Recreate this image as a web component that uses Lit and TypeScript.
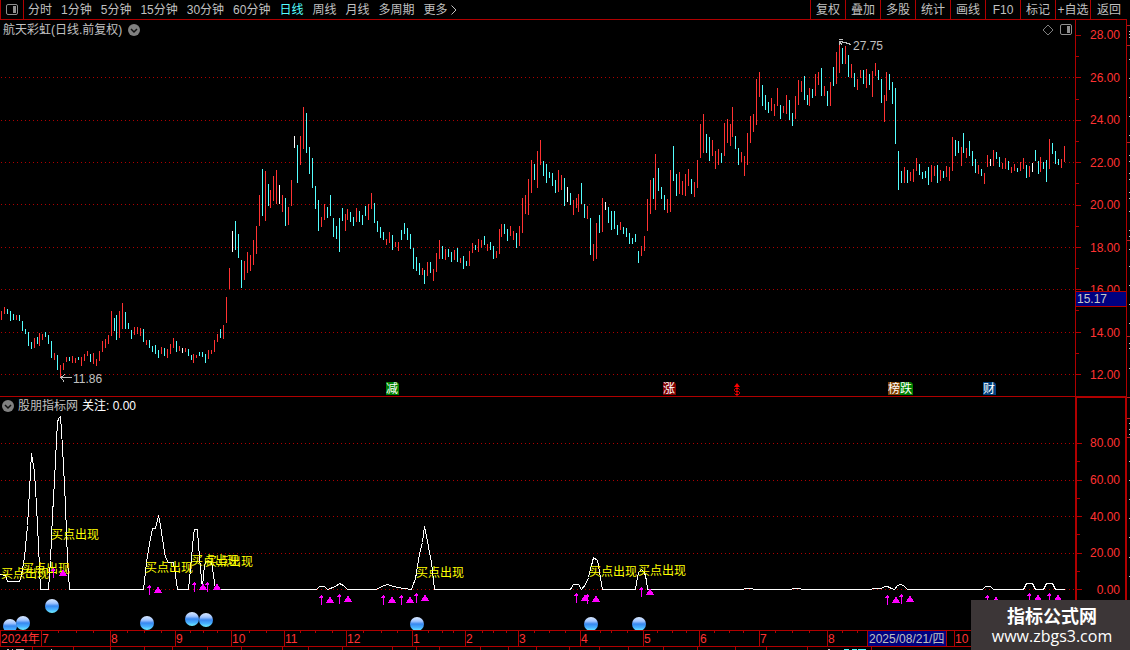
import { LitElement, html, svg, css } from "lit";
import { customElement, state } from "lit/decorators.js";
import { classMap } from "lit/directives/class-map.js";

// Each bar: x, high, low, kind (r = rising, c = falling, w = flat).
const BARS = `1,311,320r 4,307,314r 7,309,314c 10,311,321c 13,314,320c 16,315,320r 19,315,321c 22,321,331c 25,329,334c 28,332,346c 31,342,349c
34,338,348r 37,337,344c 39,333,346r 42,334,340r 45,332,337c 48,335,344c 51,341,358c 54,353,360r 57,355,370c 60,365,378r 63,363,370r 66,357,362r
69,357,361c 72,356,363r 75,358,363r 78,357,360c 81,357,366r 84,354,361r 87,351,356r 90,354,362c 93,353,364r 96,359,366r 99,351,361r 102,341,352r
105,339,348r 108,335,344r 111,311,336r 114,318,331c 116,315,340c 119,311,338r 122,303,329r 125,312,329c 128,323,329c 131,330,339c 134,327,335r
137,327,334r 140,328,336r 143,329,342c 146,340,345r 149,340,348c 152,346,352c 155,345,354c 158,350,358c 161,347,354r 164,348,356c 167,349,358r
170,344,354r 173,338,348r 176,341,352c 179,346,351r 182,348,353w 185,348,352r 188,349,356c 191,355,360c 193,354,363r 196,355,358r 199,352,356c
202,352,357c 205,354,363c 208,350,359r 211,350,354r 214,340,352r 217,334,342r 220,329,338c 223,325,339r 226,297,323r 229,268,289r 232,231,252w
235,221,250c 238,234,258c 241,260,288c 244,261,280r 247,252,273r 250,255,271r 253,240,265r 256,226,254r 259,195,226r 262,169,216c 265,171,221r
268,184,206c 270,190,208r 273,176,201r 276,170,204r 279,185,204w 282,195,212r 285,198,226c 288,207,225r 291,180,206r 294,136,148w 297,145,183c
300,136,165r 303,107,149r 306,113,153c 309,147,174c 312,158,188c 315,186,209c 318,200,231c 321,217,227r 324,204,220r 327,207,218c 330,195,216c
333,218,237c 336,226,239c 339,218,252c 342,208,221c 345,214,231r 347,209,220r 350,212,222c 353,217,226c 356,208,222r 359,211,222c 362,215,225c
365,206,216c 368,204,220r 371,193,209r 374,203,223c 377,221,232c 380,227,238c 383,232,240c 386,239,245r 389,232,243r 392,235,250c 395,242,247r
398,242,251r 401,230,240c 404,223,234c 407,228,240c 410,234,249c 413,248,269c 416,257,271c 419,263,275c 422,268,275r 424,270,284c 427,262,276r
430,262,273c 433,269,281r 436,253,272r 439,240,259r 442,246,259c 445,249,260r 448,249,257c 451,252,262c 454,250,260r 457,248,262c 460,258,263r
463,256,269c 466,261,266c 469,251,266r 472,243,253r 475,245,250c 478,239,252r 481,240,248r 484,236,245c 487,244,251r 490,242,250c 493,246,259c
496,251,258r 499,229,254r 501,224,237r 504,224,234c 507,229,241c 510,226,236r 513,231,240r 516,233,248c 519,226,246r 522,198,233r 525,195,214r
528,179,215r 531,160,193r 534,164,180c 537,151,188r 540,140,165r 543,161,176c 546,164,183c 549,172,178c 552,173,186c 555,180,193c 558,170,192r
561,175,190r 564,178,206c 567,187,202w 570,193,205c 573,200,215r 576,198,208r 578,194,212r 581,183,204c 584,204,218c 587,206,219r 590,218,255c
593,244,261r 596,223,259r 599,215,233c 602,198,232r 605,202,210w 608,207,223c 611,211,230c 614,211,229c 617,225,235c 620,222,230r 623,227,234c
626,228,237c 629,233,244c 632,238,244c 635,234,242c 638,251,263c 641,246,256r 644,236,251r 647,199,231r 650,180,214r 653,178,199c 655,154,210r
658,168,191c 661,187,199c 664,195,210c 667,199,213r 670,170,212r 673,146,181c 676,174,196c 679,172,194r 682,181,195r 685,174,196r 688,169,186r
691,179,194c 694,182,197r 697,160,188r 700,124,158r 703,114,153r 706,134,153c 709,137,161c 712,140,156r 715,151,169r 718,149,165r 721,153,163c
724,123,156r 727,119,143r 730,124,146r 732,107,137r 735,136,149c 738,148,165c 741,152,162r 744,156,176r 747,133,165r 750,116,143r 753,114,132r
756,79,125r 759,72,97r 762,85,106c 765,95,110c 768,102,113c 771,98,111r 774,104,116r 777,88,106r 780,105,119c 783,106,113r 786,95,114r
789,100,120c 792,113,126c 795,96,119r 798,80,105r 801,81,92r 804,76,100c 807,95,105c 809,88,106r 812,89,98c 815,74,96r 818,72,85r 821,68,96c
824,86,96r 827,91,106c 830,82,106r 833,67,86c 836,52,84r 839,42,73r 842,48,64c 845,46,64r 848,55,77c 851,64,78r 854,73,87c 857,79,90r
860,70,78r 863,70,84c 866,69,88r 869,74,85c 872,71,97r 875,63,76r 878,70,80c 881,79,103c 884,95,122r 886,72,101r 889,74,90c 892,82,104c
895,88,144c 898,151,190c 901,171,183c 904,167,183r 907,170,183c 910,172,181r 913,169,182r 916,158,171r 919,164,175c 922,172,179c 925,171,178c
928,167,185c 931,165,182r 934,166,176r 937,165,183c 940,170,181r 943,171,178c 946,166,177r 949,167,181r 952,137,171r 955,140,156c 958,141,153c
961,147,166r 963,133,153c 966,148,158r 969,141,156c 972,151,166c 975,159,173c 978,165,174r 981,169,176c 984,173,184r 987,155,167r 990,159,166w
993,150,166r 996,152,159c 999,157,167c 1002,163,169r 1005,158,169r 1008,161,170c 1011,167,173r 1014,164,171r 1017,168,172c 1020,162,171r
1023,158,169r 1026,165,178c 1029,166,177r 1032,163,172w 1035,150,161c 1038,161,174c 1040,157,172r 1043,162,169c 1046,160,182c 1049,139,169r
1052,143,154c 1055,151,164c 1058,159,165c 1061,159,168r 1064,146,162r`
  .trim()
  .split(/\s+/)
  .map((item) => {
    const kind = item.slice(-1);
    const [x, high, low] = item.slice(0, -1).split(",").map(Number);
    return { x, high, low, kind };
  });

const INDICATOR =
  "0,574 5,575 7,581 19,581 21,575 24,557 27,525 29,490 31,453 34,472 36,505 38,545 40,589 48,589 50,560 52,515 54,480 56,440 57,422 58,418 60,416 61,430 63,465 65,505 67,560 69,589 " +
  "143,589 146,562 149,543 152,528 155,528 158,515 160,525 163,545 165,557 168,562 173,562 175,575 177,589 188,589 190,568 193,535 194,529 197,529 198,545 200,568 202,589 203,572 205,561 211,561 213,575 215,589 " +
  "316,589 319,586 324,586 327,589 335,586 339,583 343,585 347,589 376,589 381,586 387,584 393,586 403,588 411,589 415,578 417,566 419,553 422,542 424,526 427,541 429,552 431,562 434,589 " +
  "570,589 573,584 578,584 581,589 585,584 588,577 591,565 593,557 597,560 600,577 602,589 635,589 637,577 638,572 641,569 644,572 646,580 647,589 " +
  "743,589 744,588 752,588 753,589 791,589 792,588 800,588 801,589 871,589 872,588 881,588 884,586 887,586 891,588 894,589 897,585 900,584 903,585 907,589 982,589 985,586 990,586 993,589 " +
  "1023,589 1026,583 1032,583 1035,589 1043,589 1046,583 1052,583 1055,589 1064,589";

const PRICE_GRID = [77, 120, 162, 204, 247, 289, 332, 374];
const SIGNAL_GRID = [443, 480, 516, 553, 589];
const SIGNALS = [[1, 573], [22, 568], [51, 534], [145, 567], [191, 560], [205, 561], [416, 572], [589, 571], [638, 570]];
const ARROWS = [[53, 573], [149, 590], [194, 587], [207, 587], [321, 600], [339, 599], [383, 600], [401, 600], [416, 598], [576, 598], [587, 599], [641, 592], [887, 600], [901, 599], [987, 600], [1029, 598], [1049, 598]];
const TRIANGLES = [[63, 573], [158, 590], [203, 587], [217, 587], [330, 600], [348, 599], [392, 600], [410, 600], [425, 598], [585, 598], [596, 599], [650, 592], [896, 600], [910, 599], [996, 600], [1038, 598], [1058, 598]];
const BALLS = [[10, 626], [23, 623], [52, 606], [147, 623], [192, 619], [206, 620], [417, 624], [591, 624], [639, 624]];
const EVENTS = [
  { x: 386, text: "减", fill: "#008000" },
  { x: 663, text: "涨", fill: "#800000" },
  { x: 888, text: "榜", fill: "#804000" },
  { x: 900, text: "跌", fill: "#008000" },
  { x: 983, text: "财", fill: "#004080" },
];
const MONTHS: [number, string][] = [[41, "7"], [110, "8"], [175, "9"], [231, "10"], [284, "11"], [346, "12"], [412, "1"], [465, "2"], [518, "3"], [580, "4"], [643, "5"], [699, "6"], [759, "7"], [827, "8"], [867, ""], [954, "10"]];
const MINOR = [58, 76, 93, 127, 144, 161, 190, 203, 217, 249, 266, 300, 315, 332, 363, 381, 397, 428, 442, 453, 482, 493, 506, 534, 549, 565, 600, 611, 627, 657, 672, 686, 714, 729, 743, 775, 792, 809, 842, 857];
const LOWER = [32, 73, 110, 144, 172, 207, 241, 282, 308, 342, 392, 416, 439, 480, 508, 536, 569, 599, 628, 663, 697, 735, 766, 807, 871];

const PERIODS = ["分时", "1分钟", "5分钟", "15分钟", "30分钟", "60分钟", "日线", "周线", "月线", "多周期", "更多"];
const TOOLS = ["复权", "叠加", "多股", "统计", "画线", "F10", "标记", "+自选", "返回"];
const PRICES = [28, 26, 24, 22, 20, 18, 16, 14, 12];
const LEVELS = [80, 60, 40, 20, 0];
const STRIP_MARKS = [25, 45, 142, 240, 336, 397, 418, 437];
const STRIP_DOTS = [31, 34, 37, 59, 78, 97, 116, 135, 155, 161, 173, 179, 192, 198, 211, 230, 236, 249, 266, 285, 304, 323, 343, 348, 368, 423, 429, 434, 461, 480, 499, 518, 537, 557, 576];

@customElement("app-root")
export class AppRoot extends LitElement {
  @state() private period = "日线";

  static styles = css`
    :host {
      display: block;
      position: relative;
      height: 100vh;
      overflow: hidden;
      background: #000;
      color: #c0c0c0;
      font: 12px/18px "Liberation Sans", "Noto Sans CJK SC", sans-serif;
    }
    button {
      margin: 0;
      padding: 0;
      border: 0;
      background: none;
      color: inherit;
      font: inherit;
      white-space: nowrap;
      cursor: pointer;
    }
    svg { display: block; }
    .bar {
      display: flex;
      justify-content: space-between;
      height: 19px;
      border-bottom: 1px solid #b00000;
      margin-right: 3px;
    }
    .periods, .tools { display: flex; }
    .periods { gap: 9px; }
    .layout {
      display: grid;
      place-items: center;
      width: 24px;
      margin-right: -5px;
      border: solid #b00000;
      border-width: 0 1px;
      box-sizing: border-box;
    }
    .active { color: #54ffff; }
    .more { display: flex; align-items: center; gap: 3px; }
    .tools button {
      width: 35px;
      border-left: 1px solid #b00000;
      box-sizing: border-box;
    }
    .tools button:last-child { width: 37px; }
    .workspace {
      display: grid;
      grid-template-columns: minmax(0, 1fr) 52px 3px;
    }
    .pane {
      position: relative;
      border-bottom: 1px solid #b00000;
    }
    .pane svg.chart { width: 100%; height: auto; }
    .heading {
      position: absolute;
      inset: 0 0 auto 0;
      display: flex;
      align-items: center;
      gap: 4px;
      height: 17px;
      padding: 0 3px 0 2px;
    }
    .heading.main { gap: 6px; height: 19px; padding-left: 3px; }
    .heading h2 { margin: 0; font: inherit; }
    .push { margin-left: auto; }
    .value { color: #fff; }
    .scale {
      position: relative;
      display: flex;
      justify-content: space-between;
      border: solid #b00000;
      border-width: 0 1px 1px;
      color: #ff3232;
      line-height: 12px;
      padding: 9px 6px 15px 0;
    }
    .scale.lower {
      border-width: 1px 2px 0;
      padding: 39px 5px 35px 0;
    }
    .ticks, .labels {
      display: flex;
      flex-direction: column;
      justify-content: space-between;
      list-style: none;
      margin: 0;
      padding: 0;
    }
    .labels { text-align: right; }
    .ticks { padding: 6px 0; }
    .tick { width: 3px; height: 1px; background: #b00000; }
    .tick.major { width: 5px; }
    .cursor {
      position: absolute;
      top: 271px;
      left: 0;
      right: 0;
      padding-left: 1px;
      background: #000080;
      border: solid #b00000;
      border-width: 1px 0;
      color: #c8c8c8;
      line-height: 14px;
    }
    .strip { grid-row: span 3; }
    .dates { width: 100%; height: auto; }
    .dates-end {
      border: solid #b00000;
      border-width: 1px 0 0 0;
    }
    .t { font: 12px "Liberation Sans", "Noto Sans CJK SC", sans-serif; }
    .line { stroke: #b00000; shape-rendering: crispEdges; }
    .grid { stroke: #b00000; stroke-dasharray: 1 3; shape-rendering: crispEdges; }
    .r { fill: #ff3232; }
    .c { fill: #54ffff; }
    .w { fill: #fff; }
    .crisp { shape-rendering: crispEdges; }
    .note { fill: #c0c0c0; }
    .pointer { fill: none; stroke: #c0c0c0; shape-rendering: crispEdges; }
    .signal { fill: #ff0; }
    .month { fill: #ff3232; }
    .curve { fill: none; stroke: #fff; shape-rendering: crispEdges; }
    .arrow { fill: none; stroke: #f0f; shape-rendering: crispEdges; }
    .triangle { fill: #f0f; shape-rendering: crispEdges; }
    .brand {
      position: absolute;
      right: 0;
      bottom: 0;
      box-sizing: border-box;
      width: 159px;
      height: 50px;
      padding: 3px 0 0 3px;
      background: #3c3637;
      color: #fff;
      text-align: center;
      text-decoration: none;
    }
    .brand strong, .brand span { display: block; }
    .brand strong { font: bold 18px/24px "Noto Sans CJK SC", sans-serif; }
    .brand span { font: 16px/18px "Open Sans", "Noto Sans", sans-serif; }
  `;

  private chevron() {
    return html`<svg width="12" height="12" viewBox="0 0 12 12" aria-hidden="true">
      <circle cx="6" cy="6" r="6" fill="#808080" />
      <path d="M3 5l3 3 3-3" fill="none" stroke="#101010" stroke-width="1.5" />
    </svg>`;
  }

  private panelIcon() {
    return html`<svg width="12" height="11" viewBox="0 0 12 11" aria-hidden="true">
      <rect x=".5" y=".5" width="11" height="10" rx="1.5" fill="none" stroke="#909090" />
      <rect x="7" y="2" width="3" height="7" fill="#909090" />
    </svg>`;
  }

  private ticks(count: number, majorOffset = 0) {
    return html`<div class="ticks" aria-hidden="true">
      ${Array.from({ length: count }, (_, i) => html`<i class=${classMap({ tick: true, major: (i + majorOffset) % 2 === 0 })}></i>`)}
    </div>`;
  }

  render() {
    return html`
      <header class="bar">
        <nav class="periods" aria-label="周期">
          <button class="layout" aria-label="布局">${this.panelIcon()}</button>
          ${PERIODS.map((name) => html`<button
            class=${classMap({ active: name === this.period, more: name === "更多" })}
            @click=${() => (this.period = name)}
          >${name}${name === "更多"
            ? html`<svg width="6" height="10" viewBox="0 0 6 10" aria-hidden="true"><path d="M.5 .5l4.500 4.500-4.500 4.500" fill="none" stroke="#c0c0c0" /></svg>`
            : ""}</button>`)}
        </nav>
        <div class="tools">${TOOLS.map((name) => html`<button>${name}</button>`)}</div>
      </header>
      <main class="workspace">
        <section class="pane">
          <svg class="chart" viewBox="0 20 1075 376">
            ${PRICE_GRID.map((y) => svg`<line class="grid" x1="1" x2="1075" y1=${y + 0.5} y2=${y + 0.5} />`)}
            ${BARS.map((b) => svg`<rect class="crisp ${b.kind}" x=${b.x} y=${b.high} width="1" height=${b.low - b.high} />`)}
            <path class="pointer" d="M61 377.500H72M65 374.500L61 377.500 64 381.500M839.500 45V40.500M839 39.500H843M840 41.500L845 42.500 851 44.500M840 42L842 45" />
            <text class="t note" x="73" y="383">11.86</text>
            <text class="t note" x="853" y="50">27.75</text>
            ${EVENTS.map((e) => svg`<path d="M${e.x} 382h11l2 2v11h-13z" fill=${e.fill} />
              <text class="t w" x=${e.x} y="393">${e.text}</text>`)}
            <path d="M734 387l3-4 3 4z" fill="#f00" />
            <path d="M739.500 389.500L738.500 388.500H735.500L734.500 389.500V390.500L735.500 391.500H738.500L739.500 392.500V393.500L738.500 394.500H735.500L734.500 393.500M737 387V396" fill="none" stroke="#f00" />
          </svg>
          <div class="heading main">
            <h2>航天彩虹(日线.前复权)</h2>
            <button aria-label="展开">${this.chevron()}</button>
            <button class="push" aria-label="标记">
              <svg width="12" height="12" viewBox="0 0 12 12" aria-hidden="true"><path d="M6 1l5 5-5 5-5-5z" fill="none" stroke="#808080" /></svg>
            </button>
            <button aria-label="侧栏">${this.panelIcon()}</button>
          </div>
        </section>
        <div class="scale">
          ${this.ticks(17)}
          <ul class="labels">${PRICES.map((p) => html`<li>${p.toFixed(2)}</li>`)}</ul>
          <output class="cursor">15.17</output>
        </div>
        <svg class="strip" width="3" height="630" viewBox="0 20 3 630" aria-hidden="true">
          ${STRIP_MARKS.map((y) => svg`<rect class="r" x="0" y=${y} width="3" height="1" fill-opacity=".7" />`)}
          ${STRIP_DOTS.map((y) => svg`<rect class="note" x="2" y=${y} width="1" height="1" />`)}
        </svg>

        <section class="pane">
          <svg class="chart" viewBox="0 397 1075 233">
            <defs>
              <linearGradient id="ball" x1="0" y1="0" x2="0" y2="1">
                <stop offset="0" stop-color="#d8e8ff" />
                <stop offset=".3" stop-color="#a0c4ff" />
                <stop offset=".5" stop-color="#3888f0" />
                <stop offset=".75" stop-color="#48b0ff" />
                <stop offset="1" stop-color="#70f0ff" />
              </linearGradient>
            </defs>
            ${SIGNAL_GRID.map((y) => svg`<line class="grid" x1="1" x2="1075" y1=${y + 0.5} y2=${y + 0.5} />`)}
            <polyline class="curve" points=${INDICATOR} transform="translate(.5 .5)" />
            ${SIGNALS.map(([x, y]) => svg`<text class="t signal" x=${x} y=${y + 5}>买点出现</text>`)}
            ${ARROWS.map(([x, y]) => svg`<path class="arrow" d="M${x - 2} ${y - 2.5}h4M${x - 1} ${y - 3.5}h3M${x + 0.5} ${y - 5}v10" />`)}
            ${TRIANGLES.map(([x, y]) => svg`<path class="triangle" d="M${x - 4} ${y + 3}l4-7 4 7z" />`)}
            ${BALLS.map(([x, y]) => svg`<circle cx=${x} cy=${y} r="7" fill="url(#ball)" />`)}
          </svg>
          <div class="heading">
            <button aria-label="展开">${this.chevron()}</button>
            <h2>股朋指标网</h2>
            <span class="value">关注: 0.00</span>
          </div>
        </section>
        <div class="scale lower">
          ${this.ticks(9)}
          <ul class="labels">${LEVELS.map((p) => html`<li>${p.toFixed(2)}</li>`)}</ul>
        </div>

        <svg class="dates" viewBox="0 631 1075 19">
          <rect class="crisp" x="868" y="631" width="78" height="15" fill="#000080" />
          <path class="line" d="M0 646.500H1075M.5 631V646M946.500 631V646" />
          ${MONTHS.map(([x]) => svg`<path class="line" d="M${x + 0.5} 631V646" />`)}
          ${MINOR.map((x) => svg`<path class="line" d="M${x + 0.5} 631V633" />`)}
          ${LOWER.map((x) => svg`<path class="line" d="M${x + 0.5} 647V650" />`)}
          <text class="t month" x="1" y="643">2024年</text>
          ${MONTHS.map(([x, name]) => svg`<text class="t month" x=${x + 1} y="643">${name}</text>`)}
          <text class="t note" x="869" y="643">2025/08/21/四</text>
          <path class="crisp note" d="M7 649h2v1h-2zM12 649h1v1h-1zM16 649h8v1h-8zM51 649h1v1h-1zM828 649h2v1h-2z" />
          <path class="crisp c" d="M844 649h5v1h-5zM852 649h5v1h-5zM858 649h8v1h-8z" />
        </svg>
        <div class="dates-end"></div>
      </main>
      <a class="brand" href="#"><strong>指标公式网</strong><span>www.zbgs3.com</span></a>
    `;
  }
}
